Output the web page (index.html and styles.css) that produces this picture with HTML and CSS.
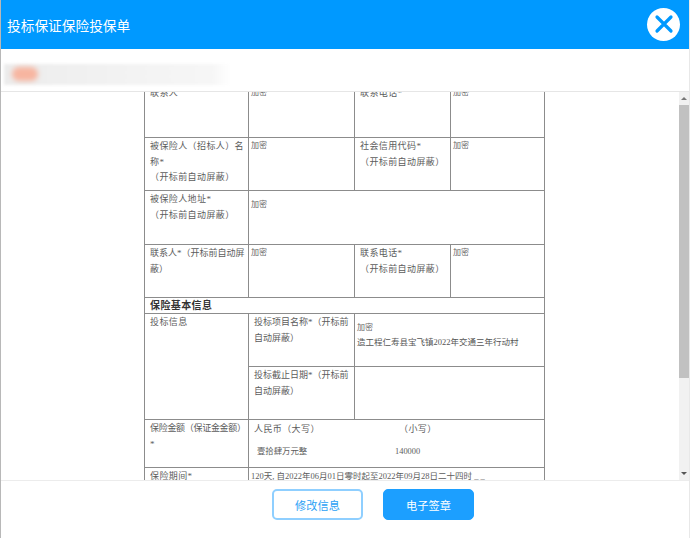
FILE: index.html
```html
<!DOCTYPE html>
<html lang="zh-CN">
<head>
    <meta charset="UTF-8">
    <meta name="viewport" content="width=device-width, initial-scale=1.0">
    <title>投标保证保险投保单</title>
    <link rel="stylesheet" href="styles.css">
</head>
<body>
    <div class="dialog">
        <header class="dialog-header">
            <h1>投标保证保险投保单</h1>
            <button class="close-btn" aria-label="关闭">
                <svg viewBox="0 0 24 24" width="24" height="24"><path d="M5 5 L19 19 M19 5 L5 19"/></svg>
            </button>
        </header>

        <div class="file-bar"><div class="file-name"><span class="file-stamp"></span></div></div>

        <div class="doc-area">
            <div class="doc-view">
                <table class="form-table">
                    <colgroup>
                        <col class="col-a"><col class="col-b"><col class="col-c"><col class="col-d">
                    </colgroup>
                    <tr class="row-tall">
                        <td>联系人</td>
                        <td class="val">加密</td>
                        <td class="inset">联系电话*</td>
                        <td class="val">加密</td>
                    </tr>
                    <tr class="row-tall">
                        <td>被保险人（招标人）名称*<br>（开标前自动屏蔽）</td>
                        <td class="val">加密</td>
                        <td class="inset">社会信用代码*<br>（开标前自动屏蔽）</td>
                        <td class="val">加密</td>
                    </tr>
                    <tr class="row-wide">
                        <td>被保险人地址*<br>（开标前自动屏蔽）</td>
                        <td class="val val-drop" colspan="3">加密</td>
                    </tr>
                    <tr class="row-tall">
                        <td class="tight">联系人*（开标前自动屏蔽）</td>
                        <td class="val">加密</td>
                        <td class="inset">联系电话*<br>（开标前自动屏蔽）</td>
                        <td class="val">加密</td>
                    </tr>
                    <tr class="row-title">
                        <td colspan="4">保险基本信息</td>
                    </tr>
                    <tr class="row-tall">
                        <td rowspan="2">投标信息</td>
                        <td class="inset tight">投标项目名称*（开标前自动屏蔽）</td>
                        <td colspan="2" class="val project">加密<br><span class="project-name">造工程仁寿县宝飞镇2022年交通三年行动村</span></td>
                    </tr>
                    <tr class="row-tall">
                        <td class="inset tight">投标截止日期*（开标前自动屏蔽）</td>
                        <td colspan="2"></td>
                    </tr>
                    <tr class="row-amount">
                        <td class="tighter">保险金额（保证金金额）*</td>
                        <td colspan="3" class="inset amount">
                            <div class="amount-line"><span class="amount-a">人民币（大写）</span><span>（小写）</span></div>
                            <div class="amount-line amount-value"><span class="amount-b">壹拾肆万元整</span><span>140000</span></div>
                        </td>
                    </tr>
                    <tr>
                        <td>保险期间*</td>
                        <td colspan="3" class="period">120天, 自2022年06月01日零时起至2022年09月28日二十四时 _ _</td>
                    </tr>
                </table>
            </div>
            <div class="scrollbar">
                <span class="arrow arrow-up"></span>
                <div class="thumb"></div>
                <span class="arrow arrow-down"></span>
            </div>
        </div>

        <footer class="dialog-footer">
            <button class="btn btn-outline">修改信息</button>
            <button class="btn btn-primary">电子签章</button>
        </footer>
    </div>
</body>
</html>
```

FILE: styles.css
```css
* {
    box-sizing: border-box;
}
html, body {
    height: 100%;
}
body {
    margin: 0;
    background: white;
    font-family: "Liberation Serif", "Noto Sans CJK SC", serif;
    overflow: hidden;
}
.dialog {
    display: flex;
    flex-direction: column;
    height: 538px;
    border-left: 1px solid #b8b8b8;
    border-right: 1px solid #e8e8e8;
}
.dialog-header {
    flex: none;
    height: 49px;
    background-color: #0099ff;
    display: flex;
    align-items: center;
    justify-content: space-between;
    padding: 0 9px 0 6px;
}
.dialog-header h1 {
    margin: 0;
    color: white;
    font-family: "Noto Sans CJK SC", sans-serif;
    font-size: 13.7px;
    font-weight: 400;
}
.close-btn {
    width: 33px;
    height: 33px;
    margin-top: -1px;
    padding: 0;
    border: none;
    border-radius: 50%;
    background: white;
    display: flex;
    align-items: center;
    justify-content: center;
}
.close-btn svg path {
    fill: none;
    stroke: #0099ff;
    stroke-width: 3.2;
    stroke-linecap: round;
}
.file-bar {
    flex: none;
    height: 43px;
    padding-top: 15px;
    border-bottom: 1px solid #e6e6e6;
}
.file-name {
    width: 226px;
    height: 21px;
    margin-left: 3px;
    background: linear-gradient(90deg, #ececec, #f3f3f3 60%, #f6f6f6 92%, white);
    filter: blur(1.5px);
    padding: 3px 0 0 8px;
}
.file-stamp {
    display: block;
    width: 26px;
    height: 14px;
    border-radius: 7px;
    background-color: #f7b5a0;
    filter: blur(2px);
}
.doc-area {
    flex: 1;
    min-height: 0;
    display: flex;
}
.doc-view {
    flex: 1;
    overflow: hidden;
    padding-left: 143px;
}
.form-table {
    width: 400px;
    margin-top: -8px;
    border-collapse: collapse;
    table-layout: fixed;
    font-size: 9px;
    letter-spacing: 0.4px;
    line-height: 15.5px;
    color: #5c5c5c;
}
.col-a { width: 104px; }
.col-b { width: 106px; }
.col-c { width: 96px; }
.col-d { width: 94px; }
.form-table td {
    border: 1px solid #8c8c8c;
    padding: 1px 3px 1px 5px;
    vertical-align: top;
    word-break: break-all;
}
.form-table .tight {
    letter-spacing: 0;
}
.form-table .tighter {
    letter-spacing: -0.3px;
}
.row-tall {
    height: 53px;
}
.row-wide {
    height: 54px;
}
.row-title {
    height: 16px;
}
.form-table .row-title td {
    padding: 1px 5px 0;
    font-weight: bold;
    font-size: 10px;
    line-height: 14px;
    color: #333;
}
.row-amount {
    height: 48px;
}
.form-table .val {
    padding: 2px;
    font-size: 8px;
    letter-spacing: 0;
    line-height: 11px;
    color: #666;
}
.form-table .val-drop {
    padding-top: 8px;
}
.form-table .inset {
    padding-left: 5px;
    padding-right: 2px;
}
.form-table .project {
    padding: 7px 2px 0;
    line-height: 14px;
}
.project-name {
    font-size: 8.5px;
    color: #555;
}
.form-table .amount {
    padding-top: 2px;
}
.amount-line {
    display: flex;
}
.amount-a {
    width: 145px;
}
.amount-b {
    width: 138px;
}
.amount-value {
    margin: 6px 0 0 3px;
    font-size: 8.4px;
    letter-spacing: 0;
}
.form-table .period {
    padding: 1px 2px;
    font-size: 8.5px;
    letter-spacing: 0;
    white-space: nowrap;
}
.scrollbar {
    flex: none;
    width: 10px;
    background: #f1f1f1;
    display: flex;
    flex-direction: column;
    align-items: center;
}
.thumb {
    width: 100%;
    height: 273px;
    background: #c1c1c1;
}
.arrow {
    width: 0;
    height: 0;
    border-left: 3px solid transparent;
    border-right: 3px solid transparent;
}
.arrow-up {
    margin: 5px 0 5px;
    border-bottom: 3px solid #777;
}
.arrow-down {
    margin-top: auto;
    margin-bottom: 5px;
    border-top: 3px solid #555;
}
.dialog-footer {
    flex: none;
    height: 58px;
    padding: 8px 0 0 56px;
    border-top: 1px solid #ececec;
    display: flex;
    justify-content: center;
    align-items: flex-start;
    gap: 20px;
}
.btn {
    width: 91px;
    height: 31px;
    border-radius: 5px;
    font-family: "Noto Sans CJK SC", sans-serif;
    font-size: 11.2px;
}
.btn-outline {
    background: white;
    border: 2px solid #8fcfff;
    color: #2ba1f5;
}
.btn-primary {
    background: #1c9fff;
    border: 1px solid #1c9fff;
    color: white;
}
```
